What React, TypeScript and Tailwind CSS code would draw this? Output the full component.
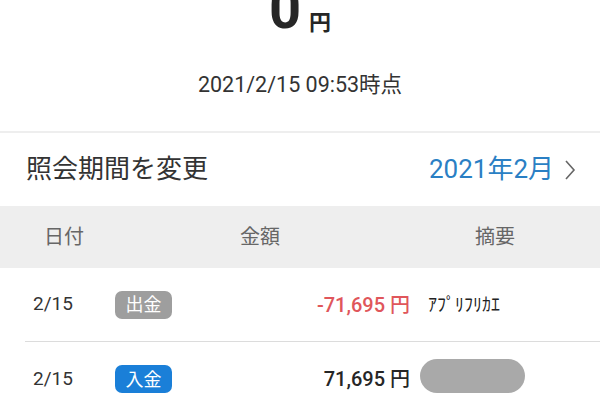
const FONT = '"Roboto", "Noto Sans CJK JP", sans-serif';

type Row = {
  date: string;
  kind: 'out' | 'in';
  amount: string;
  memo?: string;
};

const rows: Row[] = [
  { date: '2/15', kind: 'out', amount: '-71,695', memo: 'ｱﾌﾟﾘﾌﾘｶｴ' },
  { date: '2/15', kind: 'in', amount: '71,695' },
];

function Badge({ kind }: { kind: Row['kind'] }) {
  return (
    <span
      className={
        kind === 'out'
          ? 'flex h-[28px] w-[57px] items-center justify-center rounded-[7px] bg-[#9e9e9e] text-[18px] text-white'
          : 'flex h-[28px] w-[57px] items-center justify-center rounded-[7px] bg-[#1a7fd8] text-[18px] text-white'
      }
    >
      {kind === 'out' ? '出金' : '入金'}
    </span>
  );
}

export default function App() {
  return (
    <div className="h-[400px] w-[600px] overflow-hidden bg-white" style={{ fontFamily: FONT }}>
      {/* balance */}
      <div className="flex h-[131px] flex-col items-center">
        <div className="-mt-[19px] flex items-end gap-[8px] text-[#262626]">
          <span className="text-[56px] font-bold leading-none">0</span>
          <span className="mb-[3px] text-[22px] font-bold leading-none">円</span>
        </div>
        <div className="mt-[32px] text-[21.5px] text-[#333]">2021/2/15 09:53時点</div>
      </div>
      <div className="h-[2px] bg-[#eeeeee]" />

      {/* period */}
      <div className="flex h-[73px] items-center justify-between pl-[26px] pr-[24px]">
        <span className="text-[26px] text-[#333]">照会期間を変更</span>
        <span className="flex items-center gap-[10px] text-[26px] text-[#2a7fc4]">
          2021年2月
          <svg width="12" height="22" viewBox="0 0 12 22" fill="none" stroke="#666" strokeWidth="1.6">
            <path d="M2 2l8 9-8 9" />
          </svg>
        </span>
      </div>

      {/* header */}
      <div className="grid h-[62px] grid-cols-[130px_270px_200px] items-center bg-[#eeeeee] text-[20px] text-[#666]">
        <span className="pl-[44px]">日付</span>
        <span className="pl-[110px]">金額</span>
        <span className="pl-[75px]">摘要</span>
      </div>

      {/* rows */}
      <div className="pl-[25px]">
        {rows.map((r, i) => (
          <div
            key={i}
            className={
              i === 0
                ? 'flex h-[74px] items-center border-b border-[#dcdcdc]'
                : 'flex h-[74px] items-center'
            }
          >
            <span className="w-[90px] pl-[8px] text-[19px] text-[#333]">{r.date}</span>
            <Badge kind={r.kind} />
            <span
              className={
                r.kind === 'out'
                  ? 'w-[238px] text-right text-[20px] font-medium text-[#e0565b]'
                  : 'w-[238px] text-right text-[20px] font-medium text-[#262626]'
              }
            >
              {r.amount} 円
            </span>
            {r.memo ? (
              <span className="pl-[18px] text-[18px] text-[#222]">{r.memo}</span>
            ) : (
              <span className="ml-[10px] mt-[-6px] h-[34px] w-[105px] rounded-[17px] bg-[#a9a9a9]" />
            )}
          </div>
        ))}
      </div>
    </div>
  );
}
